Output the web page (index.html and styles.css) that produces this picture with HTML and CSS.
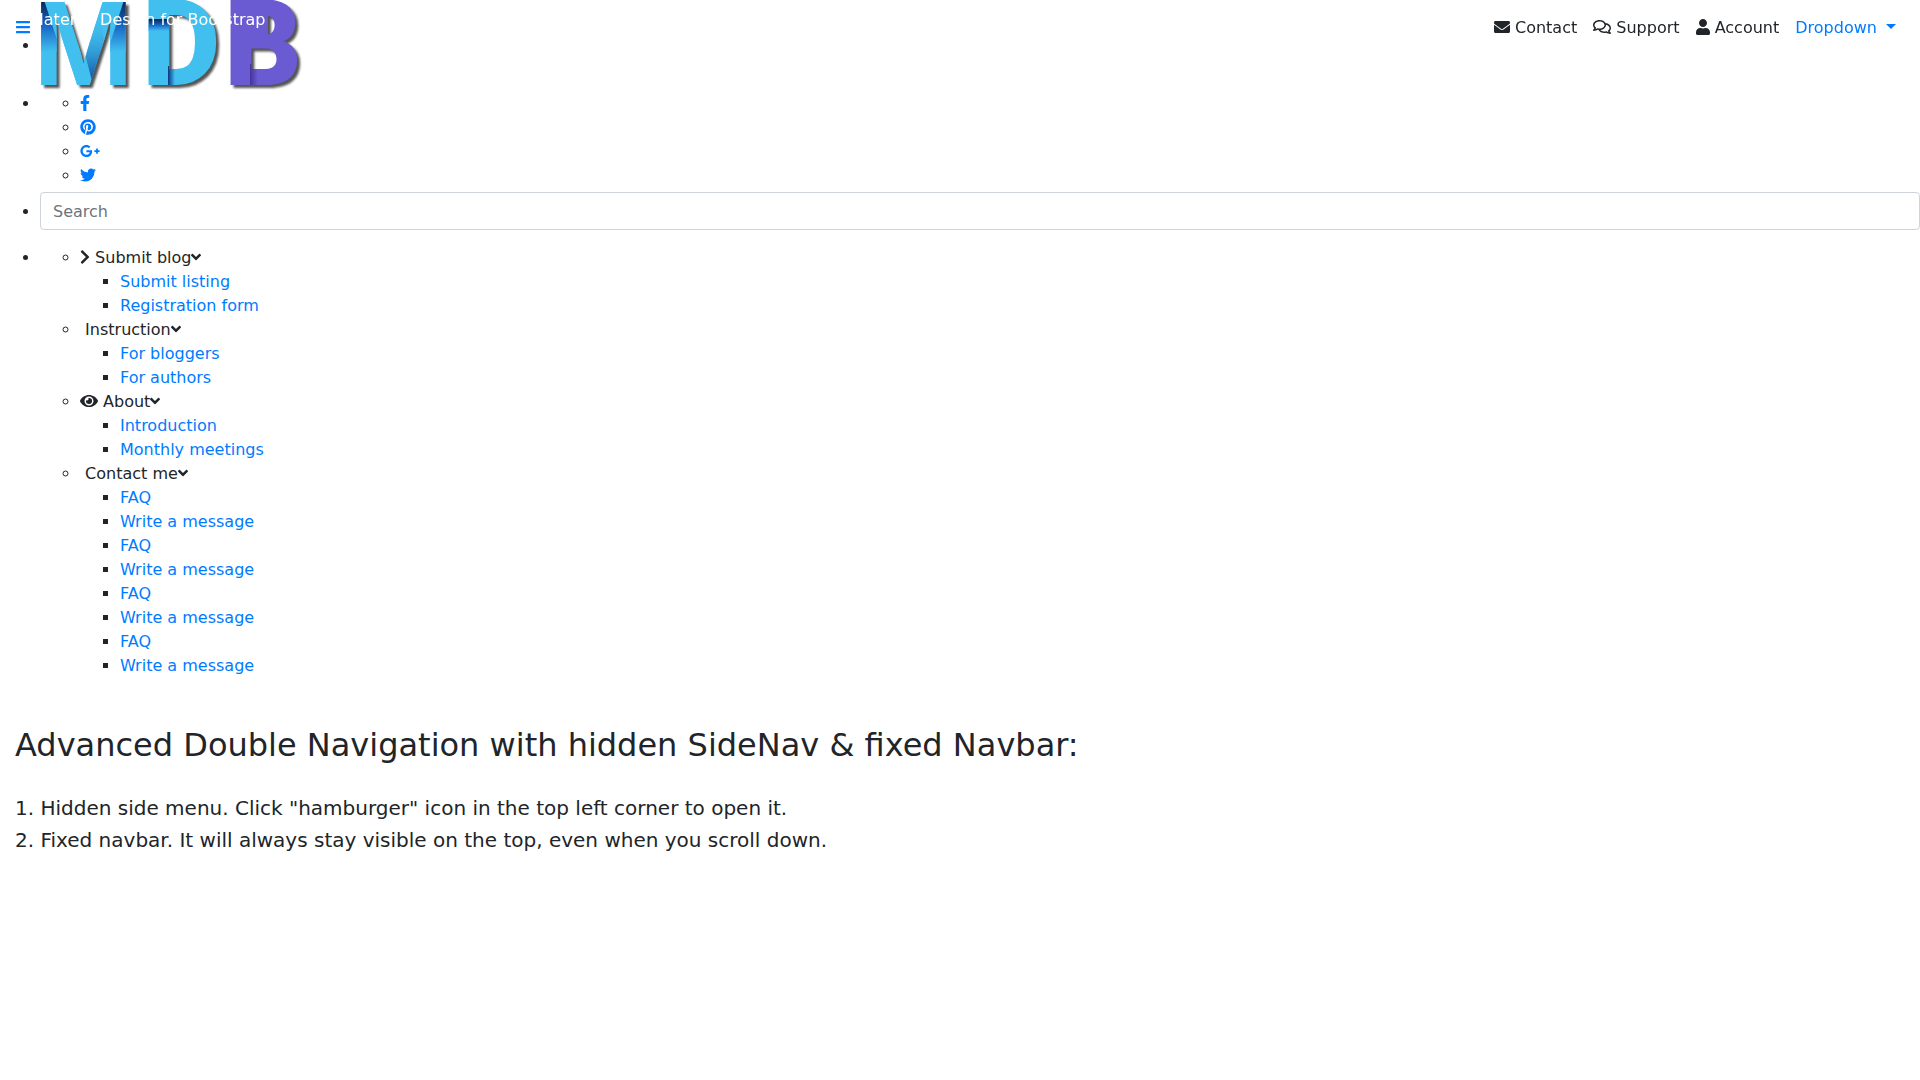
FILE: index.html
```html
<!DOCTYPE html>
<html lang="en">
<head>
  <meta charset="UTF-8">
  <meta name="viewport" content="width=device-width, initial-scale=1.0">
  <title>Material Design for Bootstrap</title>
  <link rel="stylesheet" href="styles.css">
</head>
<body>

  <!-- Icons -->
  <svg class="sprite" aria-hidden="true">
    <symbol id="angle-down" viewBox="0 0 320 512"><path d="M143 352.300L7 216.300c-9.400-9.400-9.400-24.600 0-33.900l22.600-22.600c9.400-9.400 24.600-9.400 33.900 0l96.400 96.400 96.400-96.400c9.400-9.400 24.600-9.400 33.900 0l22.600 22.600c9.400 9.400 9.400 24.600 0 33.900l-136 136c-9.200 9.400-24.400 9.400-33.800 0z"/></symbol>
  </svg>

  <header>
    <!-- Sidebar navigation -->
    <div id="slide-out" class="side-nav">
      <ul class="custom-scrollbar">
        <li>
          <div class="logo-wrapper">
            <a href="#"><svg class="logo" viewBox="0 0 250 92" role="img" aria-label="MDB">
              <defs>
                <linearGradient id="foldDown" x1="0" y1="0" x2="0" y2="1">
                  <stop offset="0" stop-color="#06244f"/>
                  <stop offset=".5" stop-color="#1767c5"/>
                  <stop offset="1" stop-color="#41c0f0"/>
                </linearGradient>
                <linearGradient id="foldUp" x1="0" y1="1" x2="0" y2="0">
                  <stop offset="0" stop-color="#0a3f92"/>
                  <stop offset="1" stop-color="#41c0f0" stop-opacity="0"/>
                </linearGradient>
                <linearGradient id="foldSide">
                  <stop offset="0" stop-color="#0a3480"/>
                  <stop offset="1" stop-color="#41c0f0"/>
                </linearGradient>
                <linearGradient id="foldPurple">
                  <stop offset="0" stop-color="#43339c"/>
                  <stop offset="1" stop-color="#6a5bd2"/>
                </linearGradient>
                <clipPath id="clipM"><text class="letter wide" x="-7" y="85">M</text></clipPath>
                <clipPath id="clipD"><text class="letter" x="102" y="85">D</text></clipPath>
                <clipPath id="clipB"><text class="letter" x="184" y="85">B</text></clipPath>
              </defs>
              <g class="letters">
                <text class="letter wide" x="-7" y="85">M</text>
                <text class="letter" x="102" y="85">D</text>
                <text class="letter purple" x="184" y="85">B</text>
                <rect class="purple" x="200" y="12" width="28" height="26" rx="4"/>
              </g>
              <g clip-path="url(#clipM)">
                <rect x="0" y="0" width="22" height="52" fill="url(#foldDown)"/>
                <rect x="68" y="0" width="22" height="52" fill="url(#foldDown)"/>
                <path d="M4 0H28L56 85H32Z" fill="#41c0f0"/>
                <path d="M64 0H84L68 50H46Z" fill="#41c0f0"/>
                <path d="M44 50L60 15L64 40L53 85Z" fill="url(#foldUp)"/>
              </g>
              <g clip-path="url(#clipD)">
                <rect x="107" y="19" width="22" height="12" fill="url(#foldDown)"/>
                <rect x="128" y="66" width="7" height="20" fill="url(#foldSide)"/>
              </g>
              <g clip-path="url(#clipB)">
                <rect x="210" y="64" width="8" height="22" fill="url(#foldPurple)"/>
              </g>
            </svg></a>
          </div>
        </li>
        <li>
          <ul class="social">
            <li><a href="#" aria-label="Facebook"><svg class="icon w10" viewBox="0 0 320 512"><path d="M279.140 288l14.220-92.660h-88.910v-60.130c0-25.350 12.420-50.060 52.240-50.060h40.420V6.260S260.430 0 225.360 0c-73.220 0-121.080 44.380-121.080 124.720v70.620H22.890V288h81.390v224h100.170V288z"/></svg></a></li>
            <li><a href="#" aria-label="Pinterest"><svg class="icon w16" viewBox="0 0 496 512"><path d="M496 256c0 137-111 248-248 248-25.600 0-50.200-3.900-73.400-11.100 10.100-16.500 25.200-43.500 30.800-65 3-11.600 15.400-59 15.400-59 8.100 15.400 31.700 28.500 56.800 28.500 74.800 0 128.700-68.800 128.700-154.300 0-81.900-66.900-143.200-152.900-143.200-107 0-163.900 71.800-163.900 150.100 0 36.400 19.400 81.700 50.300 96.100 4.700 2.200 7.200 1.200 8.300-3.300.8-3.400 5-20.300 6.900-28.100.6-2.500.3-4.700-1.700-7.100-10.100-12.500-18.300-35.300-18.300-56.600 0-54.700 41.400-107.600 112-107.600 60.900 0 103.600 41.500 103.600 100.900 0 67.100-33.900 113.600-78 113.600-24.300 0-42.600-20.100-36.700-44.800 7-29.500 20.500-61.300 20.500-82.600 0-19-10.200-34.900-31.400-34.900-24.900 0-44.900 25.700-44.900 60.200 0 22 7.400 36.800 7.400 36.800s-24.500 103.800-29 123.200c-5 21.400-3 51.600-.9 71.200C65.400 450.900 0 361.100 0 256 0 119 111 8 248 8s248 111 248 248z"/></svg></a></li>
            <li><a href="#" aria-label="Google Plus"><svg class="icon w20" viewBox="0 0 640 512"><path d="M386.061 228.496c1.834 9.692 3.143 19.384 3.143 31.956C389.204 370.205 315.599 448 204.800 448c-106.084 0-192-85.915-192-192s85.916-192 192-192c51.864 0 95.083 18.859 128.611 50.292l-52.126 50.030c-14.145-13.621-39.028-29.599-76.485-29.599-65.484 0-118.920 54.221-118.920 121.277 0 67.056 53.436 121.277 118.920 121.277 75.961 0 104.513-54.745 108.965-82.773H204.800v-66.009h181.261zm185.406 6.437V179.200h-56.001v55.733h-55.733v56.001h55.733v55.733h56.001v-55.733H627.200v-56.001h-55.733z"/></svg></a></li>
            <li><a href="#" aria-label="Twitter"><svg class="icon w16" viewBox="0 0 512 512"><path d="M459.370 151.716c.325 4.548.325 9.097.325 13.645 0 138.720-105.583 298.558-298.558 298.558-59.452 0-114.680-17.219-161.137-47.106 8.447.974 16.568 1.299 25.340 1.299 49.055 0 94.213-16.568 130.274-44.832-46.132-.975-84.792-31.188-98.112-72.772 6.498.974 12.995 1.624 19.818 1.624 9.421 0 18.843-1.300 27.614-3.573-48.081-9.747-84.143-51.980-84.143-102.985v-1.299c13.969 7.797 30.214 12.670 47.431 13.319-28.264-18.843-46.781-51.005-46.781-87.391 0-19.492 5.197-37.360 14.294-52.954 51.655 63.675 129.300 105.258 216.365 109.807-1.624-7.797-2.599-15.918-2.599-24.040 0-57.828 46.782-104.934 104.934-104.934 30.213 0 57.502 12.670 76.670 33.137 23.715-4.548 46.456-13.320 66.599-25.340-7.798 24.366-24.366 44.833-46.132 57.827 21.117-2.273 41.584-8.122 60.426-16.243-14.292 20.791-32.161 39.308-52.628 54.253z"/></svg></a></li>
          </ul>
        </li>
        <li>
          <form class="search-form" role="search">
            <input type="text" class="form-control" placeholder="Search" aria-label="Search">
          </form>
        </li>
        <li>
          <ul class="collapsible">
            <li><button type="button" class="collapsible-header"><svg class="icon w10" viewBox="0 0 320 512"><path d="M285.476 272.971L91.132 467.314c-9.373 9.373-24.569 9.373-33.941 0l-22.667-22.667c-9.357-9.357-9.375-24.522-.040-33.901L188.505 256 34.484 101.255c-9.335-9.379-9.317-24.544.040-33.901l22.667-22.667c9.373-9.373 24.569-9.373 33.941 0L285.475 239.030c9.373 9.372 9.373 24.568.001 33.941z"/></svg> Submit blog<svg class="icon w10"><use href="#angle-down"/></svg></button>
              <ul>
                <li><a href="#">Submit listing</a></li>
                <li><a href="#">Registration form</a></li>
              </ul>
            </li>
            <li><button type="button" class="collapsible-header">&nbsp;Instruction<svg class="icon w10"><use href="#angle-down"/></svg></button>
              <ul>
                <li><a href="#">For bloggers</a></li>
                <li><a href="#">For authors</a></li>
              </ul>
            </li>
            <li><button type="button" class="collapsible-header"><svg class="icon w18" viewBox="0 0 576 512"><path d="M572.520 241.400C518.290 135.590 410.930 64 288 64S57.680 135.640 3.480 241.410a32.350 32.350 0 0 0 0 29.190C57.710 376.410 165.070 448 288 448s230.320-71.640 284.520-177.410a32.350 32.350 0 0 0 0-29.190zM288 400a144 144 0 1 1 144-144 143.930 143.930 0 0 1-144 144zm0-240a95.310 95.310 0 0 0-25.310 3.790 47.850 47.850 0 0 1-66.900 66.900A95.780 95.780 0 1 0 288 160z"/></svg> About<svg class="icon w10"><use href="#angle-down"/></svg></button>
              <ul>
                <li><a href="#">Introduction</a></li>
                <li><a href="#">Monthly meetings</a></li>
              </ul>
            </li>
            <li><button type="button" class="collapsible-header">&nbsp;Contact me<svg class="icon w10"><use href="#angle-down"/></svg></button>
              <ul>
                <li><a href="#">FAQ</a></li>
                <li><a href="#">Write a message</a></li>
                <li><a href="#">FAQ</a></li>
                <li><a href="#">Write a message</a></li>
                <li><a href="#">FAQ</a></li>
                <li><a href="#">Write a message</a></li>
                <li><a href="#">FAQ</a></li>
                <li><a href="#">Write a message</a></li>
              </ul>
            </li>
          </ul>
        </li>
      </ul>
    </div>

    <!-- Navbar -->
    <nav class="navbar">
      <a href="#slide-out" class="button-collapse" aria-label="Open menu"><svg class="icon w14" viewBox="0 0 448 512"><path d="M16 132h416c8.837 0 16-7.163 16-16V76c0-8.837-7.163-16-16-16H16C7.163 60 0 67.163 0 76v40c0 8.837 7.163 16 16 16zm0 160h416c8.837 0 16-7.163 16-16v-40c0-8.837-7.163-16-16-16H16c-8.837 0-16 7.163-16 16v40c0 8.837 7.163 16 16 16zm0 160h416c8.837 0 16-7.163 16-16v-40c0-8.837-7.163-16-16-16H16c-8.837 0-16 7.163-16 16v40c0 8.837 7.163 16 16 16z"/></svg></a>
      <p class="breadcrumb-dn">Material Design for Bootstrap</p>
      <ul class="nav-links">
        <li><a class="nav-link" href="#"><svg class="icon w16" viewBox="0 0 512 512"><path d="M502.300 190.800c3.900-3.100 9.700-.2 9.700 4.700V400c0 26.500-21.500 48-48 48H48c-26.500 0-48-21.500-48-48V195.600c0-5 5.700-7.800 9.700-4.700 22.400 17.400 52.100 39.500 154.100 113.600 21.100 15.400 56.700 47.800 92.200 47.600 35.700.3 72-32.800 92.300-47.600 102-74.100 131.600-96.300 154-113.700zM256 320c23.200.4 56.600-29.200 73.400-41.400 132.700-96.300 142.800-104.700 173.400-128.700 5.800-4.500 9.200-11.500 9.200-18.900v-19c0-26.500-21.500-48-48-48H48c-26.500 0-48 21.500-48 48v19c0 7.400 3.400 14.300 9.200 18.900 30.600 23.900 40.700 32.400 173.400 128.700 16.800 12.200 50.200 41.800 73.400 41.400z"/></svg> Contact</a></li>
        <li><a class="nav-link" href="#"><svg class="icon w18" viewBox="0 0 576 512"><path d="M532 386.200c27.500-27.100 44-61.100 44-98.200 0-80-76.500-146.100-176.200-157.900C368.300 72.500 294.300 32 208 32 93.100 32 0 103.600 0 192c0 37 16.500 71 44 98.200-15.300 30.700-37.300 54.500-37.700 54.900-6.300 6.700-8.100 16.500-4.400 25 3.600 8.500 12 14 21.200 14 53.500 0 96.700-20.200 125.200-38.800 9.200 2.100 18.700 3.700 28.400 4.900C208.100 407.600 281.800 448 368 448c20.800 0 40.800-2.400 59.800-6.800C456.300 459.700 499.400 480 553 480c9.200 0 17.500-5.500 21.200-14 3.600-8.500 1.900-18.300-4.400-25-.4-.3-22.500-24.100-37.800-54.800zm-392.800-92.300L122.100 305c-14.100 9.100-28.500 16.300-43.100 21.400 2.700-4.700 5.400-9.700 8-14.800l15.500-31.100L77.700 256C64.200 242.600 48 220.700 48 192c0-60.700 73.300-112 160-112s160 51.300 160 112-73.300 112-160 112c-16.500 0-33-1.900-49-5.600l-19.800-4.500zM498.300 352l-24.700 24.400 15.500 31.100c2.600 5.100 5.300 10.100 8 14.800-14.600-5.100-29-12.300-43.100-21.400l-17.100-11.100-19.900 4.600c-16 3.700-32.500 5.600-49 5.600-54 0-102.200-20.100-131.300-49.700C338 339.500 416 272.900 416 192c0-3.400-.4-6.700-.7-10C479.700 196.500 528 238.800 528 288c0 28.700-16.200 50.600-29.700 64z"/></svg> Support</a></li>
        <li><a class="nav-link" href="#"><svg class="icon w14" viewBox="0 0 448 512"><path d="M224 256c70.700 0 128-57.300 128-128S294.700 0 224 0 96 57.300 96 128s57.300 128 128 128zm89.600 32h-16.700c-22.200 10.200-46.900 16-72.900 16s-50.600-5.800-72.900-16h-16.700C60.200 288 0 348.200 0 422.400V464c0 26.500 21.500 48 48 48h352c26.500 0 48-21.500 48-48v-41.600c0-74.200-60.200-134.400-134.400-134.400z"/></svg> Account</a></li>
        <li><a class="nav-link dropdown-toggle" href="#">Dropdown </a></li>
      </ul>
    </nav>
  </header>

  <main>
    <h2>Advanced Double Navigation with hidden SideNav &amp; fixed Navbar:</h2>
    <p>1. Hidden side menu. Click "hamburger" icon in the top left corner to open it.</p>
    <p>2. Fixed navbar. It will always stay visible on the top, even when you scroll down.</p>
  </main>

</body>
</html>
```
FILE: styles.css
```css
* {
  box-sizing: border-box;
}

body {
  margin: 0;
  font-family: "DejaVu Sans", sans-serif;
  font-size: 16px;
  line-height: 24px;
  color: #212529;
  background-color: #fff;
}

a {
  color: #007bff;
  text-decoration: none;
}

ul {
  margin: 0;
  padding-left: 40px;
}

.sprite {
  position: absolute;
  width: 0;
  height: 0;
}

.icon {
  height: 16px;
  fill: currentColor;
  vertical-align: -2px;
}

.w10 { width: 10px; }
.w14 { width: 14px; }
.w16 { width: 16px; }
.w18 { width: 18px; }
.w20 { width: 20px; }

/* Side nav */
.custom-scrollbar {
  margin-bottom: 16px;
}

.logo {
  width: 250px;
  height: 92px;
  overflow: visible;
  vertical-align: middle;
}

.letters {
  filter: drop-shadow(3px 3px 1px #555);
}

.letter {
  font-family: Roboto, sans-serif;
  font-size: 121px;
  font-weight: 900;
  fill: #41c0f0;
}

.wide {
  font-family: "Liberation Sans", sans-serif;
}

.purple {
  fill: #6a5bd2;
}

.search-form {
  padding-top: 4px;
  margin-bottom: 16px;
}

.form-control {
  display: block;
  width: 100%;
  height: 38px;
  padding: 6px 12px;
  font-family: inherit;
  font-size: 16px;
  line-height: 24px;
  color: #495057;
  background-color: #fff;
  border: 1px solid #ced4da;
  border-radius: 4px;
}

.form-control::placeholder {
  color: #6c757d;
}

.collapsible-header {
  padding: 0;
  border: 0;
  background: none;
  font: inherit;
  color: inherit;
  cursor: pointer;
}

/* Navbar */
.navbar {
  position: fixed;
  top: 0;
  left: 0;
  right: 0;
  display: flex;
  align-items: center;
  padding: 8px 16px;
}

.breadcrumb-dn {
  margin: 0 auto 16px 0;
  color: #fff;
}

.nav-links {
  display: flex;
  padding: 0;
  list-style: none;
}

.nav-link {
  display: block;
  padding: 8px;
  color: #212529;
}

.dropdown-toggle {
  color: #007bff;
  white-space: pre;
}

.dropdown-toggle::after {
  content: "";
  display: inline-block;
  margin-left: 4px;
  vertical-align: 4px;
  border-top: 5px solid;
  border-right: 5px solid transparent;
  border-left: 5px solid transparent;
}

/* Content */
main {
  padding: 32px 15px;
}

h2 {
  margin: 0 0 28px;
  font-size: 32px;
  font-weight: normal;
  line-height: 38px;
}

main p {
  margin: 0;
  font-size: 20px;
  line-height: 32px;
}
```
